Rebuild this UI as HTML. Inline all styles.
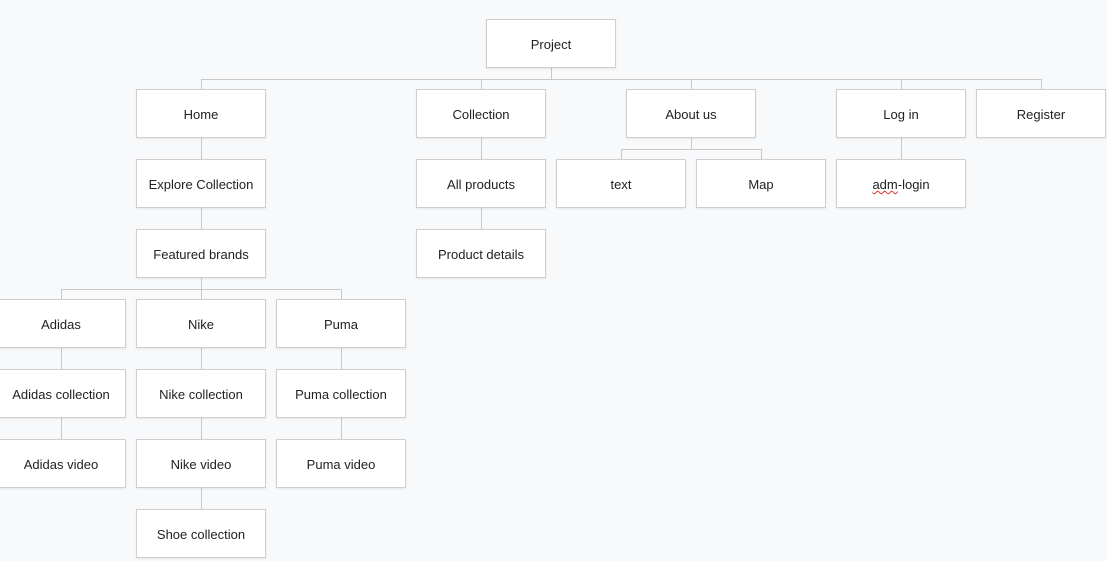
<!DOCTYPE html>
<html><head><meta charset="utf-8"><style>
body{margin:0;width:1107px;height:561px;background:#f8f9fb;overflow:hidden;position:relative;font-family:"Liberation Sans","DejaVu Sans",sans-serif;}
.b{position:absolute;width:128px;height:45px;padding-top:2px;background:#fff;border:1px solid #cfcfcf;box-shadow:0 1px 2px rgba(0,0,0,.08);display:flex;align-items:center;justify-content:center;font-size:13px;color:#222;}
.h{position:absolute;height:1px;background:#c8c8c8}
.v{position:absolute;width:1px;background:#c8c8c8}
</style></head><body>
<div class="v" style="left:551px;top:68px;height:11px"></div>
<div class="h" style="left:201px;top:79px;width:841px"></div>
<div class="v" style="left:201px;top:79px;height:10px"></div>
<div class="v" style="left:481px;top:79px;height:10px"></div>
<div class="v" style="left:691px;top:79px;height:10px"></div>
<div class="v" style="left:901px;top:79px;height:10px"></div>
<div class="v" style="left:1041px;top:79px;height:10px"></div>
<div class="v" style="left:201px;top:138px;height:21px"></div>
<div class="v" style="left:201px;top:208px;height:21px"></div>
<div class="v" style="left:201px;top:278px;height:11px"></div>
<div class="h" style="left:61px;top:289px;width:281px"></div>
<div class="v" style="left:61px;top:289px;height:10px"></div>
<div class="v" style="left:201px;top:289px;height:10px"></div>
<div class="v" style="left:341px;top:289px;height:10px"></div>
<div class="v" style="left:481px;top:138px;height:21px"></div>
<div class="v" style="left:481px;top:208px;height:21px"></div>
<div class="v" style="left:691px;top:138px;height:11px"></div>
<div class="h" style="left:621px;top:149px;width:141px"></div>
<div class="v" style="left:621px;top:149px;height:10px"></div>
<div class="v" style="left:761px;top:149px;height:10px"></div>
<div class="v" style="left:901px;top:138px;height:21px"></div>
<div class="v" style="left:61px;top:348px;height:21px"></div>
<div class="v" style="left:61px;top:418px;height:21px"></div>
<div class="v" style="left:201px;top:348px;height:21px"></div>
<div class="v" style="left:201px;top:418px;height:21px"></div>
<div class="v" style="left:201px;top:488px;height:21px"></div>
<div class="v" style="left:341px;top:348px;height:21px"></div>
<div class="v" style="left:341px;top:418px;height:21px"></div>

<div class="b" style="left:486px;top:19px">Project</div>
<div class="b" style="left:136px;top:89px">Home</div>
<div class="b" style="left:416px;top:89px">Collection</div>
<div class="b" style="left:626px;top:89px">About us</div>
<div class="b" style="left:836px;top:89px">Log in</div>
<div class="b" style="left:976px;top:89px">Register</div>
<div class="b" style="left:136px;top:159px">Explore Collection</div>
<div class="b" style="left:416px;top:159px">All products</div>
<div class="b" style="left:556px;top:159px">text</div>
<div class="b" style="left:696px;top:159px">Map</div>
<div class="b" style="left:836px;top:159px"><span style="text-decoration:underline wavy #d33;text-decoration-thickness:1px">adm</span>-login</div>
<div class="b" style="left:136px;top:229px">Featured brands</div>
<div class="b" style="left:416px;top:229px">Product details</div>
<div class="b" style="left:-4px;top:299px">Adidas</div>
<div class="b" style="left:136px;top:299px">Nike</div>
<div class="b" style="left:276px;top:299px">Puma</div>
<div class="b" style="left:-4px;top:369px">Adidas collection</div>
<div class="b" style="left:136px;top:369px">Nike collection</div>
<div class="b" style="left:276px;top:369px">Puma collection</div>
<div class="b" style="left:-4px;top:439px">Adidas video</div>
<div class="b" style="left:136px;top:439px">Nike video</div>
<div class="b" style="left:276px;top:439px">Puma video</div>
<div class="b" style="left:136px;top:509px">Shoe collection</div>
</body></html>
